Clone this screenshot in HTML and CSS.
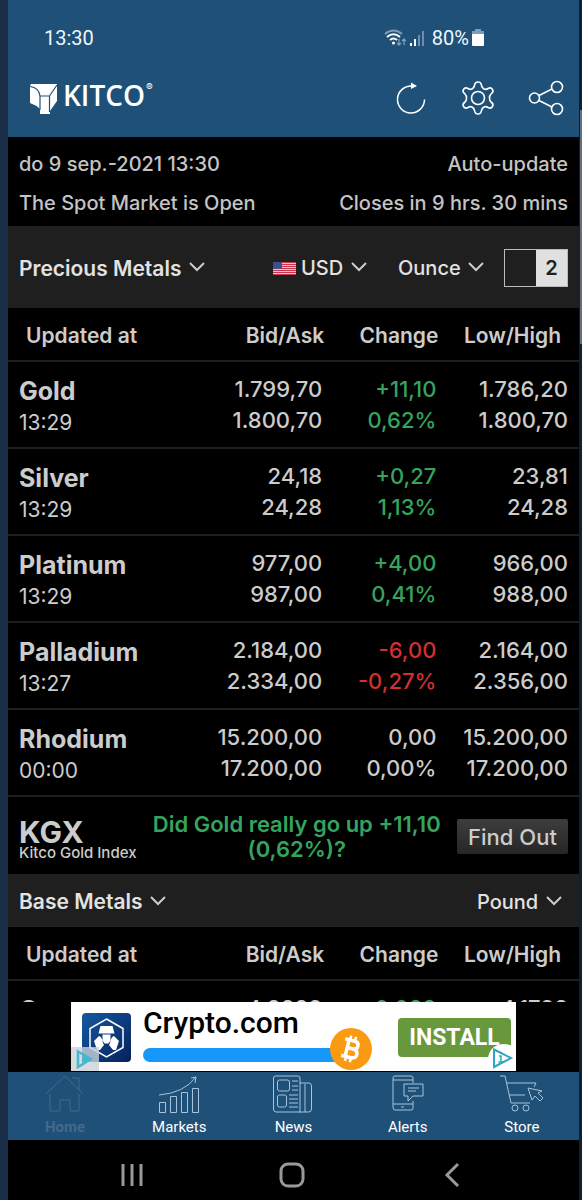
FILE: index.html
```html
<!DOCTYPE html>
<html lang="en">
<head>
    <meta charset="UTF-8">
    <meta name="viewport" content="width=device-width, initial-scale=1.0">
    <title>Kitco</title>
    <link rel="stylesheet" href="styles.css">
</head>
<body>
    <div class="app">
        <div class="status-bar">
            <span>13:30</span>
            <div class="status-icons">
                <svg width="22" height="18" viewBox="0 0 22 18" fill="none" stroke-width="2">
                    <path d="M1 5Q9.500-2 18 5" stroke="#7f9cb8"/>
                    <path d="M3 8Q9.500 2.500 16 8M6 11Q9.500 8 13 11" stroke="#fff"/>
                    <circle cx="9.500" cy="14" r="1.500" fill="#fff"/>
                    <path d="M15 10v6M13 14l2 2 2-2M20 16v-6M18 12l2-2 2 2" stroke="#7f9cb8" stroke-width="1.300"/>
                </svg>
                <svg class="signal" width="16" height="18" viewBox="0 0 16 18">
                    <path d="M1 14h2v3H1zM5 10h2v7H5z" fill="#fff"/>
                    <path d="M9 6h2v11H9zM13 2h2v15h-2z" fill="#6d8dab"/>
                </svg>
                <span>80%</span>
                <svg width="12" height="18" viewBox="0 0 12 18">
                    <path d="M3 0h6v2h3v3H0V2h3z" fill="#7f9cb8"/>
                    <path d="M0 5h12v11q0 1-1 1H1q-1 0-1-1z" fill="#fff"/>
                </svg>
            </div>
        </div>

        <header class="header">
            <a href="#" class="logo">
                <svg width="29" height="32" viewBox="0 0 29 32">
                    <path d="M2 1h26v17l-7 10v3H11v-5Q7 22 1 20V3z" fill="#fff"/>
                    <path d="M1 3.500q9 1 10 9.500h9.500L28 2M11 13v14M20.500 13v16" fill="none" stroke="#1f5077" stroke-width="1.200"/>
                </svg>
                <span class="logo-text">KITCO</span><sup>®</sup>
            </a>
            <div class="actions">
                <button type="button" aria-label="Refresh">
                    <svg width="36" height="36" viewBox="0 0 36 36" fill="none" stroke="#fff" stroke-width="1.500">
                        <path d="M32.500 19.500A13.500 13.500 0 1 1 20 6"/>
                        <path d="M19 2.500l6 3.500-6 3z" fill="#fff" stroke="none"/>
                    </svg>
                </button>
                <button type="button" aria-label="Settings">
                    <svg width="36" height="36" viewBox="0 0 36 36" fill="none" stroke="#fff" stroke-width="1.600" stroke-linejoin="round">
                        <path d="M14.500 5.500Q15 2 18 2T21.500 5.500Q22 8 24 9T28 8.500Q31 7 32.500 9.500T31 14Q29.500 15.500 29.500 18T31 22Q34 24 32.500 26.500T28 27.500Q26 26 24 27T21.500 30.500Q21 34 18 34T14.500 30.500Q14 28 12 27T8 27.500Q5 29 3.500 26.500T5 22Q6.500 20.500 6.500 18T5 14Q2 12 3.500 9.500T8 8.500Q10 10 12 9T14.500 5.500z"/>
                        <circle cx="18" cy="18" r="6.500"/>
                    </svg>
                </button>
                <button type="button" aria-label="Share">
                    <svg width="36" height="36" viewBox="0 0 36 36" fill="none" stroke="#fff" stroke-width="1.600">
                        <circle cx="6.500" cy="18" r="5"/>
                        <circle cx="29" cy="7" r="5.500"/>
                        <circle cx="29" cy="29" r="5.500"/>
                        <path d="M11 15.500l13-6.500M11 20.500l13 6.500"/>
                    </svg>
                </button>
            </div>
        </header>

        <main class="content">
            <section class="info">
                <div class="info-row"><span>do 9 sep.-2021 13:30</span><span>Auto-update</span></div>
                <div class="info-row"><span>The Spot Market is Open</span><span>Closes in 9 hrs. 30 mins</span></div>
            </section>

            <div class="filters">
                <label class="dropdown wide">
                    <select aria-label="Market">
                        <option>Precious Metals</option>
                    </select>
                    <svg width="16" height="12" viewBox="0 0 16 12"><path d="M1 1l7 7 7-7"/></svg>
                </label>
                <label class="dropdown">
                    <svg class="flag" width="23" height="13" viewBox="0 0 23 13">
                        <path d="M0 0h23v13H0z" fill="#e8c3c9"/>
                        <path d="M0 .5h23M0 2.500h23M0 4.500h23M0 6.500h23M0 8.500h23M0 10.500h23M0 12.500h23" stroke="#c9364f"/>
                        <path d="M0 0h9v7H0z" fill="#3c4f8f"/>
                    </svg>
                    <select aria-label="Currency">
                        <option>USD</option>
                    </select>
                    <svg width="16" height="12" viewBox="0 0 16 12"><path d="M1 1l7 7 7-7"/></svg>
                </label>
                <label class="dropdown unit">
                    <select aria-label="Weight">
                        <option>Ounce</option>
                    </select>
                    <svg width="16" height="12" viewBox="0 0 16 12"><path d="M1 1l7 7 7-7"/></svg>
                </label>
                <button type="button" class="decimals" aria-label="Decimals"><span>2</span></button>
            </div>

            <table class="quotes">
                <thead>
                    <tr><th>Updated at</th><th>Bid/Ask</th><th>Change</th><th>Low/High</th></tr>
                </thead>
                <tbody>
                    <tr>
                        <td><b>Gold</b>13:29</td>
                        <td>1.799,70<br>1.800,70</td>
                        <td class="up">+11,10<br>0,62%</td>
                        <td>1.786,20<br>1.800,70</td>
                    </tr>
                    <tr>
                        <td><b>Silver</b>13:29</td>
                        <td>24,18<br>24,28</td>
                        <td class="up">+0,27<br>1,13%</td>
                        <td>23,81<br>24,28</td>
                    </tr>
                    <tr>
                        <td><b>Platinum</b>13:29</td>
                        <td>977,00<br>987,00</td>
                        <td class="up">+4,00<br>0,41%</td>
                        <td>966,00<br>988,00</td>
                    </tr>
                    <tr>
                        <td><b>Palladium</b>13:27</td>
                        <td>2.184,00<br>2.334,00</td>
                        <td class="down">-6,00<br>-0,27%</td>
                        <td>2.164,00<br>2.356,00</td>
                    </tr>
                    <tr>
                        <td><b>Rhodium</b>00:00</td>
                        <td>15.200,00<br>17.200,00</td>
                        <td>0,00<br>0,00%</td>
                        <td>15.200,00<br>17.200,00</td>
                    </tr>
                </tbody>
            </table>

            <section class="kgx">
                <div class="kgx-name"><h2>KGX</h2><p>Kitco Gold Index</p></div>
                <p class="kgx-question">Did Gold really go up +11,10 (0,62%)?</p>
                <button type="button" class="find-out">Find Out</button>
            </section>

            <div class="filters base">
                <label class="dropdown wide">
                    <select aria-label="Market">
                        <option>Base Metals</option>
                    </select>
                    <svg width="16" height="12" viewBox="0 0 16 12"><path d="M1 1l7 7 7-7"/></svg>
                </label>
                <label class="dropdown">
                    <select aria-label="Weight">
                        <option>Pound</option>
                    </select>
                    <svg width="16" height="12" viewBox="0 0 16 12"><path d="M1 1l7 7 7-7"/></svg>
                </label>
            </div>

            <table class="quotes">
                <thead>
                    <tr><th>Updated at</th><th>Bid/Ask</th><th>Change</th><th>Low/High</th></tr>
                </thead>
                <tbody>
                    <tr>
                        <td><b>Copper</b>13:29</td>
                        <td>4,2888<br>4,2898</td>
                        <td class="up">0,088<br>2,09%</td>
                        <td>4,1788<br>4,2898</td>
                    </tr>
                </tbody>
            </table>
        </main>

        <aside class="ad-row">
            <div class="ad">
                <svg class="ad-logo" width="49" height="49" viewBox="0 0 49 49">
                    <defs>
                        <linearGradient id="cro" x1="0" y1="0" x2="1" y2="1">
                            <stop offset="0" stop-color="#1559a0"/>
                            <stop offset="1" stop-color="#06205c"/>
                        </linearGradient>
                    </defs>
                    <rect width="49" height="49" rx="4" fill="url(#cro)"/>
                    <path d="M24.500 6L41 15.500v19L24.500 44 8 34.500v-19z" fill="none" stroke="#fff" stroke-width="1.500"/>
                    <path d="M18.500 13h12l2 7.500h-16zM20.500 21.500h8v6l-2 3h-4l-2-3zM12 28l5-5q3 1 4 7l1 2-4 5h-3zM37 28l-5-5q-3 1-4 7l-1 2 4 5h3z" fill="#fff"/>
                </svg>
                <div class="ad-text">
                    <span class="ad-title">Crypto.com</span>
                    <div class="ad-bar">
                        <svg class="coin" width="42" height="42" viewBox="0 0 42 42">
                            <circle cx="21" cy="21" r="21" fill="#fa9a12"/>
                            <g transform="rotate(14 21 21)" fill="none" stroke="#fff" stroke-width="3.500">
                                <path d="M13 12.500h9q5 0 5 4t-5 4h-5M22 20.500q6 0 6 4.500t-6 4.500h-9M17 12v18"/>
                                <path d="M18 8v4M23 8v4M18 30v4M23 30v4" stroke-width="2.500"/>
                            </g>
                        </svg>
                    </div>
                </div>
                <button type="button" class="install">INSTALL</button>
                <svg class="choice-left" width="28" height="24" viewBox="0 0 28 24">
                    <path d="M0 0h28v24H0z" fill="#cbd2da" opacity=".8"/>
                    <path d="M7 4.500l13 7.500-13 8z" fill="none" stroke="#45b8cc" stroke-width="2.500"/>
                    <path d="M11 8l8 4-8 4z" fill="#45b8cc"/>
                </svg>
                <svg class="choice-right" width="28" height="27" viewBox="0 0 28 27">
                    <path d="M0 14Q2 1 15 0q8 0 13 4v23H3q-3-6-3-13z" fill="#fff"/>
                    <path d="M6 5.500L23 14 6 23z" fill="none" stroke="#2fa4c4" stroke-width="2"/>
                    <path d="M11 12h2v6M10.500 18h5M12 8.500h2" fill="none" stroke="#2fa4c4" stroke-width="1.500"/>
                </svg>
            </div>
        </aside>

        <nav class="tabs">
            <a href="#" class="active">
                <svg width="44" height="38" viewBox="0 0 44 38">
                    <path d="M3 19L22 1l18 18M29 3h7v12M7 19v17h10V25h10v11h9V19"/>
                </svg>
                Home
            </a>
            <a href="#">
                <svg width="44" height="38" viewBox="0 0 44 38">
                    <path d="M2 20Q27 18 39 2M34 3l5-1-1 6M2.500 27.500h6v10h-6zM13.500 21.500h6v16h-6zM24.500 17.500h6v20h-6zM35.500 13.500h6v24h-6z"/>
                </svg>
                Markets
            </a>
            <a href="#">
                <svg width="44" height="38" viewBox="0 0 44 38">
                    <path d="M5 1h22q2 0 2 2v34H5q-2.500 0-2.500-3V3q0-2 2.500-2zM29 8h9q2.500 0 2.500 3v23q0 3-3 3H28M34 9v28"/>
                    <rect x="6.500" y="5" width="12" height="11" rx="2"/>
                    <rect x="6.500" y="20" width="9" height="12" rx="2"/>
                    <path d="M21 6h6M21 11h6M21 15h6M18 20h9M18 24h9M18 28h9M18 32h9"/>
                </svg>
                News
            </a>
            <a href="#">
                <svg width="44" height="38" viewBox="0 0 44 38">
                    <path d="M27 8V3q0-2-2-2H9Q7 1 7 3v29q0 3 2 3h16q2 0 2-2v-7M7 5h20M7 29h20M15 32h3"/>
                    <path d="M18 9h19v12H27l-5 5v-5h-4zM22 13h11M22 16h8"/>
                </svg>
                Alerts
            </a>
            <a href="#">
                <svg width="44" height="38" viewBox="0 0 44 38">
                    <path d="M0 1h5l6 27h19M7 8h29l-2 4M9 20h16"/>
                    <circle cx="15" cy="33" r="3"/>
                    <circle cx="26" cy="33" r="3"/>
                    <path d="M28 13l4 12 3-4 5 5 3-3-5-5 4-2z"/>
                </svg>
                Store
            </a>
        </nav>

        <div class="system-nav">
            <button type="button" aria-label="Recent apps">
                <svg width="26" height="26" viewBox="0 0 26 26"><path d="M4 2v22M13 2v22M22 2v22"/></svg>
            </button>
            <button type="button" aria-label="Home screen">
                <svg width="26" height="26" viewBox="0 0 26 26"><rect x="2" y="2" width="22" height="22" rx="7"/></svg>
            </button>
            <button type="button" aria-label="Back">
                <svg width="26" height="26" viewBox="0 0 26 26"><path d="M19 2L8 13l11 11"/></svg>
            </button>
        </div>
    </div>
    <div class="scrollbar"><div class="thumb"></div></div>
</body>
</html>
```
FILE: styles.css
```css
* {
    box-sizing: border-box;
}
body {
    display: flex;
    height: 100vh;
    margin: 0;
    padding-left: 8px;
    background-color: #1a2d47;
    font-family: Inter, sans-serif;
    font-size: 20px;
    color: #ccc;
}
button, select {
    margin: 0;
    padding: 0;
    border: 0;
    background: none;
    font: inherit;
    color: inherit;
}
svg {
    display: block;
    flex: none;
}
h2, p {
    margin: 0;
}
a {
    color: inherit;
    text-decoration: none;
}
.app {
    flex: 1;
    min-width: 0;
    display: flex;
    flex-direction: column;
    background-color: #000;
}
.scrollbar {
    width: 3px;
    padding: 110px 0 0 1px;
    background-color: #10202f;
}
.thumb {
    height: 234px;
    background-color: #65707d;
}

/* top bars */
.status-bar {
    display: flex;
    justify-content: space-between;
    align-items: center;
    height: 75px;
    padding: 0 95px 0 36px;
    background-color: #1f5077;
    font-family: Roboto, sans-serif;
    color: #eef6fc;
}
.status-icons {
    display: flex;
    align-items: center;
    gap: 3px;
}
.signal {
    margin-right: 4px;
}
.header {
    display: flex;
    justify-content: space-between;
    align-items: flex-start;
    height: 62px;
    padding: 5px 15px 0 21px;
    background-color: #1f5077;
    color: #fff;
}
.logo {
    display: flex;
    align-items: center;
    gap: 5px;
    padding-top: 3px;
}
.logo-text {
    padding-bottom: 8px;
    font-family: "Open Sans", sans-serif;
    font-size: 28px;
    font-weight: 600;
    line-height: 24px;
}
.logo sup {
    align-self: flex-start;
    margin-left: -4px;
    font-size: 10px;
    line-height: 8px;
}
.actions {
    display: flex;
    gap: 32px;
}

/* market info */
.content {
    flex: 1;
    min-height: 0;
    overflow: hidden;
}
.info {
    padding: 8px 11px 3px;
}
.info-row {
    display: flex;
    justify-content: space-between;
    font-weight: 500;
    line-height: 39px;
    color: #c4c4c4;
}
.filters {
    display: flex;
    align-items: center;
    gap: 31px;
    height: 82px;
    padding: 2px 11px 0;
    background-color: #1f1f1f;
    color: #e2e2e2;
    font-weight: 500;
}
.filters.base {
    height: 53px;
    padding-right: 17px;
}
.dropdown {
    display: flex;
    align-items: center;
    gap: 7px;
}
.dropdown.wide {
    margin-right: auto;
    font-size: 21px;
    font-weight: 600;
}
.dropdown.unit {
    margin-right: -11px;
}
.dropdown select {
    appearance: none;
}
.dropdown path {
    stroke-width: 2;
}
.dropdown svg:last-child {
    fill: none;
    stroke: #ccc;
}
.dropdown .flag {
    margin-right: -2px;
}
.flag path {
    stroke-width: 1;
}
.decimals {
    width: 64px;
    height: 38px;
    padding-left: 31px;
    border: 1px solid #bbb;
}
.decimals span {
    display: block;
    background-color: #e0e0e0;
    color: #1f1f1f;
    font-weight: 600;
    line-height: 36px;
}

/* quotes */
.quotes {
    width: 100%;
    table-layout: fixed;
    border-collapse: collapse;
    font-size: 22px;
    font-weight: 500;
}
.quotes th {
    width: 20%;
    height: 53px;
    padding: 2px 15px 0 0;
    border-bottom: 2px solid #1e1e1e;
    font-size: 21px;
    font-weight: 600;
    text-align: right;
}
.quotes th:first-child {
    width: 36%;
    padding-left: 18px;
    text-align: left;
}
.quotes th:nth-child(2), .quotes th:last-child {
    width: 22%;
}
.quotes th:last-child {
    padding-right: 18px;
}
.quotes td {
    height: 87px;
    padding: 0 17px 0 0;
    border-bottom: 2px solid #1e1e1e;
    line-height: 31px;
    text-align: right;
}
.quotes td:first-child {
    padding: 4px 0 0 11px;
    font-size: 21px;
    font-weight: 400;
    text-align: left;
}
.quotes td:last-child {
    padding-right: 11px;
}
.quotes b {
    display: block;
    font-size: 25px;
    font-weight: 700;
}
.up {
    color: #35a45f;
}
.down {
    color: #d32f2f;
}

/* gold index */
.kgx {
    display: flex;
    align-items: center;
    height: 77px;
    padding: 2px 11px 0;
}
.kgx-name {
    padding-top: 6px;
}
.kgx h2 {
    font-size: 30px;
    font-weight: 700;
    line-height: 26px;
}
.kgx-name p {
    font-size: 15px;
    font-weight: 500;
    line-height: 16px;
}
.kgx-question {
    flex: 1;
    padding: 0 8px;
    font-size: 22px;
    font-weight: 600;
    line-height: 25px;
    text-align: center;
    color: #35a45f;
}
.find-out {
    width: 111px;
    height: 35px;
    border-radius: 2px;
    background: linear-gradient(#3d3d3d, #262626);
    font-size: 22px;
    font-weight: 500;
}

/* banner */
.ad-row {
    padding: 0 63px 1px;
}
.ad {
    position: relative;
    display: flex;
    height: 69px;
    padding: 0 5px 0 11px;
    background-color: #fff;
}
.ad-logo {
    margin-top: 11px;
}
.ad-text {
    flex: 1;
    padding: 3px 46px 0 12px;
}
.ad-title {
    display: block;
    font-family: Roboto, sans-serif;
    font-size: 30px;
    font-weight: 500;
    line-height: 36px;
    color: #000;
}
.ad-bar {
    position: relative;
    height: 14px;
    margin-top: 7px;
    border-radius: 7px;
    background-color: #1598fa;
}
.coin {
    position: absolute;
    top: -20px;
    right: -20px;
}
.install {
    width: 113px;
    height: 39px;
    margin-top: 16px;
    border-radius: 4px;
    background-color: #68983c;
    font-family: Roboto, sans-serif;
    font-size: 23px;
    font-weight: 700;
    color: #fff;
}
.choice-left {
    position: absolute;
    left: 0;
    bottom: 0;
}
.choice-right {
    position: absolute;
    right: 0;
    bottom: 0;
}

/* bottom bars */
.tabs {
    display: grid;
    grid-template-columns: repeat(5, 1fr);
    height: 68px;
    padding-top: 3px;
    background-color: #1f5077;
    font-family: Roboto, sans-serif;
    font-size: 15px;
    line-height: 28px;
    color: #fff;
}
.tabs a {
    display: flex;
    flex-direction: column;
    align-items: center;
}
.tabs svg {
    fill: none;
    stroke: #a8c4dc;
}
.tabs .active {
    font-weight: 700;
    color: #43698c;
}
.tabs .active svg {
    stroke: #43698c;
}
.system-nav {
    display: grid;
    grid-template-columns: repeat(3, 1fr);
    height: 60px;
    padding: 9px 47px 0 44px;
}
.system-nav button {
    display: flex;
    justify-content: center;
    align-items: center;
}
.system-nav svg {
    fill: none;
    stroke: #999;
    stroke-width: 3;
}
```
